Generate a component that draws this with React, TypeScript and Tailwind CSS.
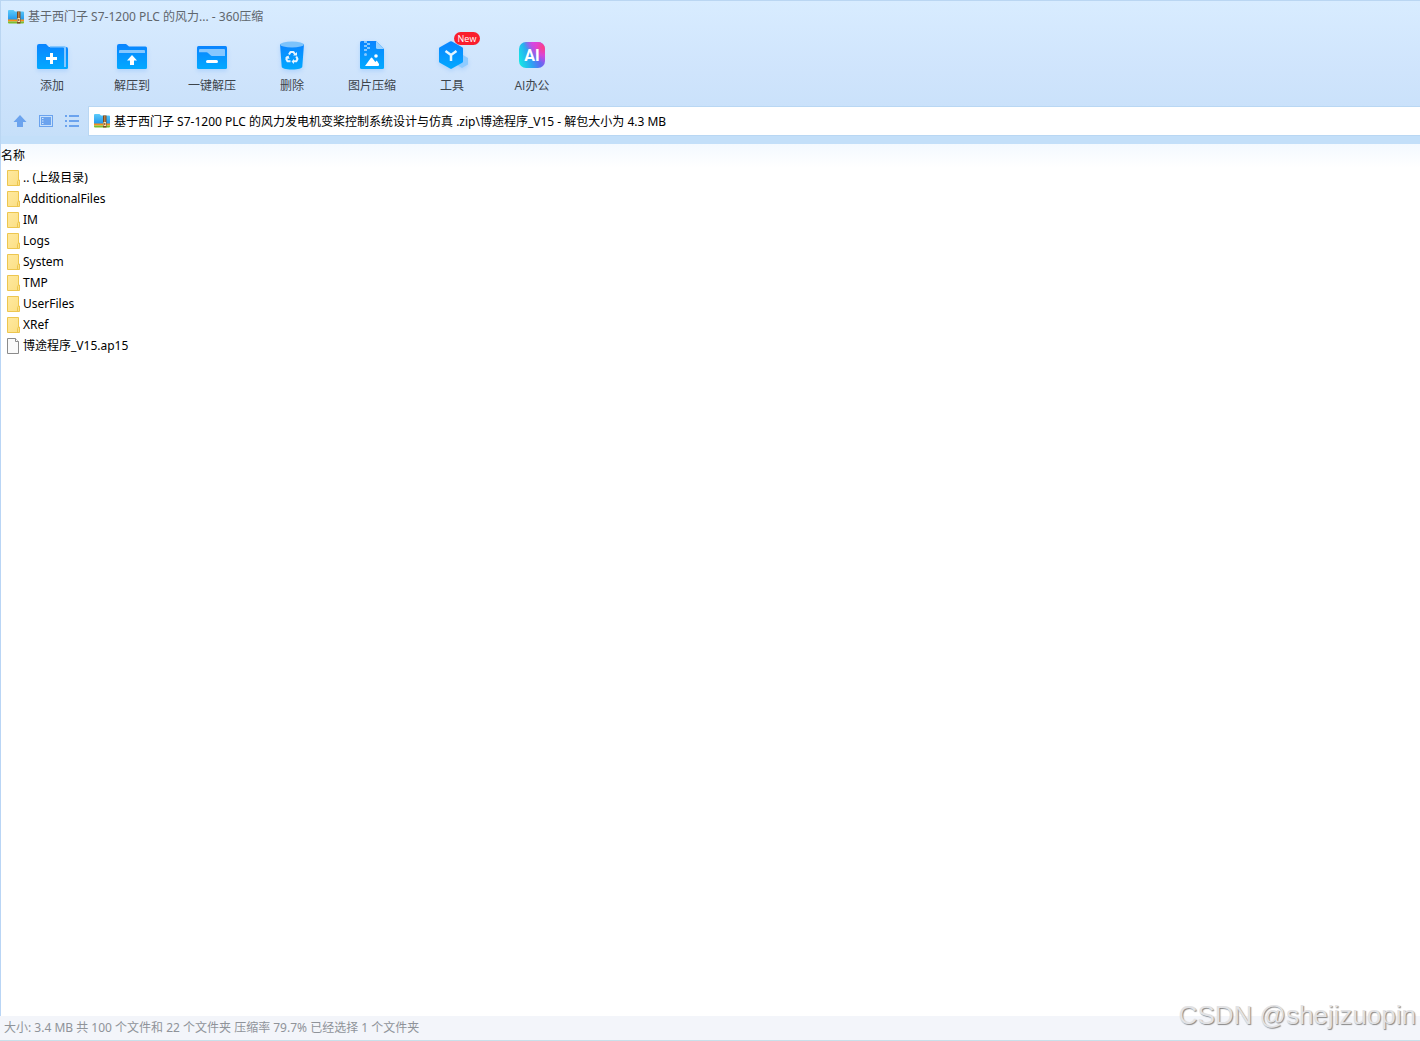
import React from "react";

function ArchiveIcon() {
  return (
    <svg width="16" height="16" viewBox="0 0 16 16" aria-hidden="true" className="shrink-0">
      <defs>
        <linearGradient id="archive-blue" x1="0" y1="0" x2="0" y2="1">
          <stop offset="0" stopColor="#5ccbfa" />
          <stop offset="1" stopColor="#2196ec" />
        </linearGradient>
      </defs>
      <path d="M0 2a1 1 0 0 1 1-1h4.500L7 2.500h8a1 1 0 0 1 1 1V11H0z" fill="url(#archive-blue)" />
      <path d="M0 10.500h16V12.500H0z" fill="#f98f1b" />
      <path d="M0 12.500h16V13.500a1 1 0 0 1-1 1H1a1 1 0 0 1-1-1z" fill="#7cbd2d" />
      <path d="M9 2.500h3.500V14.500H9z" fill="#7a4a22" />
      <path d="M10.200 2.500h1.200V9h-1.200z" fill="#c98c4e" />
      <path d="M9.500 9h2.500v4H9.500z" fill="#fbe3b0" />
      <path d="M10.300 10h1v2h-1z" fill="#7a3d12" />
    </svg>
  );
}

function BlueGradient({ id }: { id: string }) {
  return (
    <defs>
      <linearGradient id={id} x1="0" y1="0" x2="0" y2="1">
        <stop offset="0" stopColor="#0a84ff" />
        <stop offset="1" stopColor="#02a9ff" />
      </linearGradient>
    </defs>
  );
}

function ToolIcon({ children }: { children: React.ReactNode }) {
  return (
    <svg width="40" height="36" viewBox="0 0 40 36" aria-hidden="true" className="drop-shadow-[0_2px_2px_rgba(40,140,255,0.2)]">
      {children}
    </svg>
  );
}

function AddIcon() {
  return (
    <ToolIcon>
      <BlueGradient id="g-add" />
      <path d="M8 10h26a2 2 0 0 1 2 2v18.500a1.500 1.500 0 0 1-1.500 1.500H8z" fill="url(#g-add)" />
      <path d="M18 9h14.500a1.500 1.500 0 0 1 1.500 1.500V30h-2V11H18z" fill="#85c7ff" />
      <path d="M5 9a2 2 0 0 1 2-2h7l3.500 3.500H31a1 1 0 0 1 1 1V32H6.500A1.500 1.500 0 0 1 5 30.500z" fill="url(#g-add)" />
      <path d="M14 21.500h11M19.500 16v11" stroke="#fff" strokeWidth="3" />
    </ToolIcon>
  );
}

function ExtractToIcon() {
  return (
    <ToolIcon>
      <BlueGradient id="g-ext" />
      <path d="M5 9a2 2 0 0 1 2-2h7l3 2.500h16.500A1.500 1.500 0 0 1 35 11v19.500a1.500 1.500 0 0 1-1.500 1.500h-27A1.500 1.500 0 0 1 5 30.500z" fill="url(#g-ext)" />
      <path d="M8 13h24a1 1 0 0 1 1 1v2H7v-2a1 1 0 0 1 1-1z" fill="#85c7ff" />
      <path d="M20 18l5 5.500h-3V28h-4v-4.500h-3z" fill="#fff" />
    </ToolIcon>
  );
}

function QuickExtractIcon() {
  return (
    <ToolIcon>
      <BlueGradient id="g-quick" />
      <rect x="5" y="9" width="30" height="23" rx="1.500" fill="url(#g-quick)" />
      <path d="M8 12h24a1 1 0 0 1 1 1v6H20a2 2 0 0 1-1.500-.7L16 16a2 2 0 0 0-1.500-.7H7V13a1 1 0 0 1 1-1z" fill="#85c7ff" />
      <rect x="14" y="23" width="12" height="3" rx="1.500" fill="#fff" />
    </ToolIcon>
  );
}

function DeleteIcon() {
  return (
    <ToolIcon>
      <BlueGradient id="g-del" />
      <path d="M8 7h24l-1.700 22.500c0 2-4 3-10.300 3s-10.300-1-10.300-3z" fill="url(#g-del)" />
      <ellipse cx="20" cy="7.500" rx="12" ry="3" fill="#7cc3fc" />
      <g fill="none" stroke="#e8f5ff" strokeWidth="2" strokeLinejoin="round">
        <path d="M17 17.500l1.500-2.500h3l1.700 2.800" />
        <path d="M24.200 19.500l1.300 2.500-1.200 2.300H21" />
        <path d="M18.500 24.300h-3L14.300 22l1.500-2.500" />
      </g>
      <path d="M21 18.500h4v-3.500zM22 22v5l-2.500-2.500zM13 20.500l3.500-2 1 3.500z" fill="#e8f5ff" />
    </ToolIcon>
  );
}

function ImageIcon() {
  return (
    <ToolIcon>
      <BlueGradient id="g-img" />
      <path d="M8 5.500A1.500 1.500 0 0 1 9.500 4H24l8 8v18.500a1.500 1.500 0 0 1-1.500 1.500h-21A1.500 1.500 0 0 1 8 30.500z" fill="url(#g-img)" />
      <path d="M24 4l8 8h-6.500a1.500 1.500 0 0 1-1.500-1.500z" fill="#9bd2ff" />
      <path d="M12 4h3v2h-3zM15 6h3v2h-3zM12 8h3v2h-3zM15 10h3v2h-3zM12 12h3v2h-3z" fill="#85c7ff" />
      <circle cx="13.500" cy="17.500" r="1.500" fill="#85c7ff" />
      <circle cx="24" cy="19" r="1.800" fill="#fff" />
      <path d="M13 29l5.800-8a1 1 0 0 1 1.500 0l3 4 1.500-1.500L27 27v1a1 1 0 0 1-1 1z" fill="#fff" />
    </ToolIcon>
  );
}

function ToolsIcon() {
  return (
    <ToolIcon>
      <BlueGradient id="g-tools" />
      <path d="M31 18l5 3v6.500L30 31l-5-3z" fill="#8fcbff" />
      <path d="M18 4.500L7.800 10.200A1.500 1.500 0 0 0 7 11.500v13a1.500 1.500 0 0 0 .8 1.300L18 31.600a2 2 0 0 0 2 0l10.200-5.800a1.500 1.500 0 0 0 .8-1.300v-13a1.500 1.500 0 0 0-.8-1.300L20 4.500a2 2 0 0 0-2 0z" fill="url(#g-tools)" />
      <path d="M13.500 14l5.500 4 5.500-4M19 18v6" fill="none" stroke="#e4f5ff" strokeWidth="2.500" />
    </ToolIcon>
  );
}

function AiIcon() {
  return (
    <svg width="40" height="36" viewBox="0 0 40 36" aria-hidden="true">
      <defs>
        <linearGradient id="g-ai" x1="0" y1="0.700" x2="1" y2="0.400">
          <stop offset="0" stopColor="#16e6e4" />
          <stop offset="0.400" stopColor="#2ba4f2" />
          <stop offset="0.700" stopColor="#5c6cf2" />
          <stop offset="1" stopColor="#a94fe8" />
        </linearGradient>
        <radialGradient id="g-ai-pink" cx="0.950" cy="0.200" r="0.600">
          <stop offset="0" stopColor="#ff3f80" />
          <stop offset="0.500" stopColor="#e542d0" stopOpacity="0.900" />
          <stop offset="1" stopColor="#d746e8" stopOpacity="0" />
        </radialGradient>
        <radialGradient id="g-ai-top" cx="0.550" cy="0" r="0.400">
          <stop offset="0" stopColor="#e542e0" />
          <stop offset="1" stopColor="#e542e0" stopOpacity="0" />
        </radialGradient>
      </defs>
      <rect x="7" y="5" width="26" height="26" rx="7" fill="url(#g-ai)" />
      <rect x="7" y="5" width="26" height="26" rx="7" fill="url(#g-ai-top)" />
      <rect x="7" y="5" width="26" height="26" rx="7" fill="url(#g-ai-pink)" />
      <text x="20" y="24" textAnchor="middle" fill="#fff" fontSize="16" fontWeight="700" fontFamily="Roboto, sans-serif">
        AI
      </text>
    </svg>
  );
}

function FolderIcon() {
  return (
    <svg width="14" height="16" viewBox="0 0 14 16" aria-hidden="true" className="shrink-0">
      <defs>
        <linearGradient id="g-folder" x1="0" y1="0" x2="1" y2="1">
          <stop offset="0" stopColor="#ffe99f" />
          <stop offset="1" stopColor="#fbdf84" />
        </linearGradient>
      </defs>
      <path d="M.5.500h11V10h1v5.500H.500z" fill="url(#g-folder)" stroke="#edc64f" />
      <path d="M10.500 15.500v-4l1-1.500" fill="none" stroke="#edc64f" />
    </svg>
  );
}

function DocumentIcon() {
  return (
    <svg width="14" height="16" viewBox="0 0 14 16" aria-hidden="true" className="shrink-0">
      <path d="M.5.500h8l3 3v12H.500z" fill="#fafafa" stroke="#8b8b8b" />
      <path d="M8.500.500v3h3" fill="#fff" stroke="#8b8b8b" />
    </svg>
  );
}

const tools = [
  { label: "添加", icon: <AddIcon /> },
  { label: "解压到", icon: <ExtractToIcon /> },
  { label: "一键解压", icon: <QuickExtractIcon /> },
  { label: "删除", icon: <DeleteIcon /> },
  { label: "图片压缩", icon: <ImageIcon /> },
  { label: "工具", icon: <ToolsIcon />, badge: "New" },
  { label: "AI办公", icon: <AiIcon /> },
];

const folders = [".. (上级目录)", "AdditionalFiles", "IM", "Logs", "System", "TMP", "UserFiles", "XRef"];

function FileRow({ name, icon }: { name: string; icon: React.ReactNode }) {
  return (
    <tr>
      <td className="p-0">
        <div className="flex h-[21px] items-end gap-[2px] pb-[3px] pl-[6px] leading-4">
          {icon}
          <span>{name}</span>
        </div>
      </td>
    </tr>
  );
}

export default function App() {
  return (
    <div className="relative flex min-h-screen flex-col bg-white font-['Noto_Sans','Noto_Sans_CJK_SC',sans-serif] text-[12px] text-black">
      <header className="border-l border-t border-[#bad6f2] bg-linear-to-b from-[#d8ecff] via-[#cfe4fc] to-[#c5dff9]">
        <div className="flex h-[31px] items-center gap-1 pl-[7px] text-[#5f666d]">
          <ArchiveIcon />
          <h1>基于西门子 S7-1200 PLC 的风力... - 360压缩</h1>
        </div>
        <nav className="flex h-[74px] pl-[11px] font-['Open_Sans','Noto_Sans_CJK_SC',sans-serif]">
          {tools.map((tool) => (
            <button key={tool.label} type="button" className="relative flex w-20 flex-col items-center pt-[5px] text-[#3d444b]">
              {tool.icon}
              <span className="mt-[3px] leading-5">{tool.label}</span>
              {tool.badge && (
                <span className="absolute left-[42px] top-0 h-[13px] w-[26px] rounded-full bg-[#fa1e2d] text-center text-[9px] leading-[13px] text-white">
                  {tool.badge}
                </span>
              )}
            </button>
          ))}
        </nav>
        <div className="flex items-center">
          <div className="flex w-[87px] shrink-0 items-center gap-3 pl-3 text-[#6ba3ee]">
            <button type="button" aria-label="向上">
              <svg width="14" height="14" viewBox="0 0 14 14">
                <path d="M7 1l6.500 7H10v5H4V8H.500z" fill="currentColor" />
              </svg>
            </button>
            <button type="button" aria-label="预览">
              <svg width="14" height="14" viewBox="0 0 14 14">
                <rect x=".5" y="1.500" width="13" height="11" fill="none" stroke="currentColor" />
                <path d="M2 3h10v8H2z" fill="currentColor" />
                <path d="M3 4.500h1.500M3 7h1.500M3 9.500h1.500" stroke="#d4e7fc" />
              </svg>
            </button>
            <button type="button" aria-label="列表">
              <svg width="14" height="14" viewBox="0 0 14 14">
                <path d="M0 2h2M4 2h10M0 7h2M4 7h10M0 12h2M4 12h10" stroke="currentColor" strokeWidth="2" />
              </svg>
            </button>
          </div>
          <label className="flex h-[30px] min-w-0 grow items-center gap-1 border-y border-l border-[#b9d7f3] bg-white pl-[5px]">
            <ArchiveIcon />
            <input
              aria-label="路径"
              className="h-full min-w-0 grow outline-none"
              defaultValue={"基于西门子 S7-1200 PLC 的风力发电机变桨控制系统设计与仿真 .zip\\博途程序_V15 - 解包大小为 4.3 MB"}
            />
          </label>
        </div>
        <div className="h-2 bg-[#c3dff9]" />
      </header>

      <main className="grow border-l border-[#b9d5f5]">
        <table className="w-full border-collapse">
          <thead>
            <tr className="bg-linear-to-b from-[#f3f9ff] to-white">
              <th className="h-6 p-0 text-left font-normal leading-6">名称</th>
            </tr>
          </thead>
          <tbody>
            {folders.map((name) => (
              <FileRow key={name} name={name} icon={<FolderIcon />} />
            ))}
            <FileRow name="博途程序_V15.ap15" icon={<DocumentIcon />} />
          </tbody>
        </table>
      </main>

      <footer className="h-[25px] border-b border-[#c8e0ea] bg-[#f3f5fa] pl-1 leading-6 text-[#8f9399]">
        大小: 3.4 MB 共 100 个文件和 22 个文件夹 压缩率 79.7% 已经选择 1 个文件夹
      </footer>

      <div className="pointer-events-none absolute bottom-[10px] right-1 font-['Liberation_Sans',sans-serif] text-[26px] leading-8 text-[#e2e2e4] [text-shadow:1px_1px_1px_#888]">
        CSDN @shejizuopin
      </div>
    </div>
  );
}
